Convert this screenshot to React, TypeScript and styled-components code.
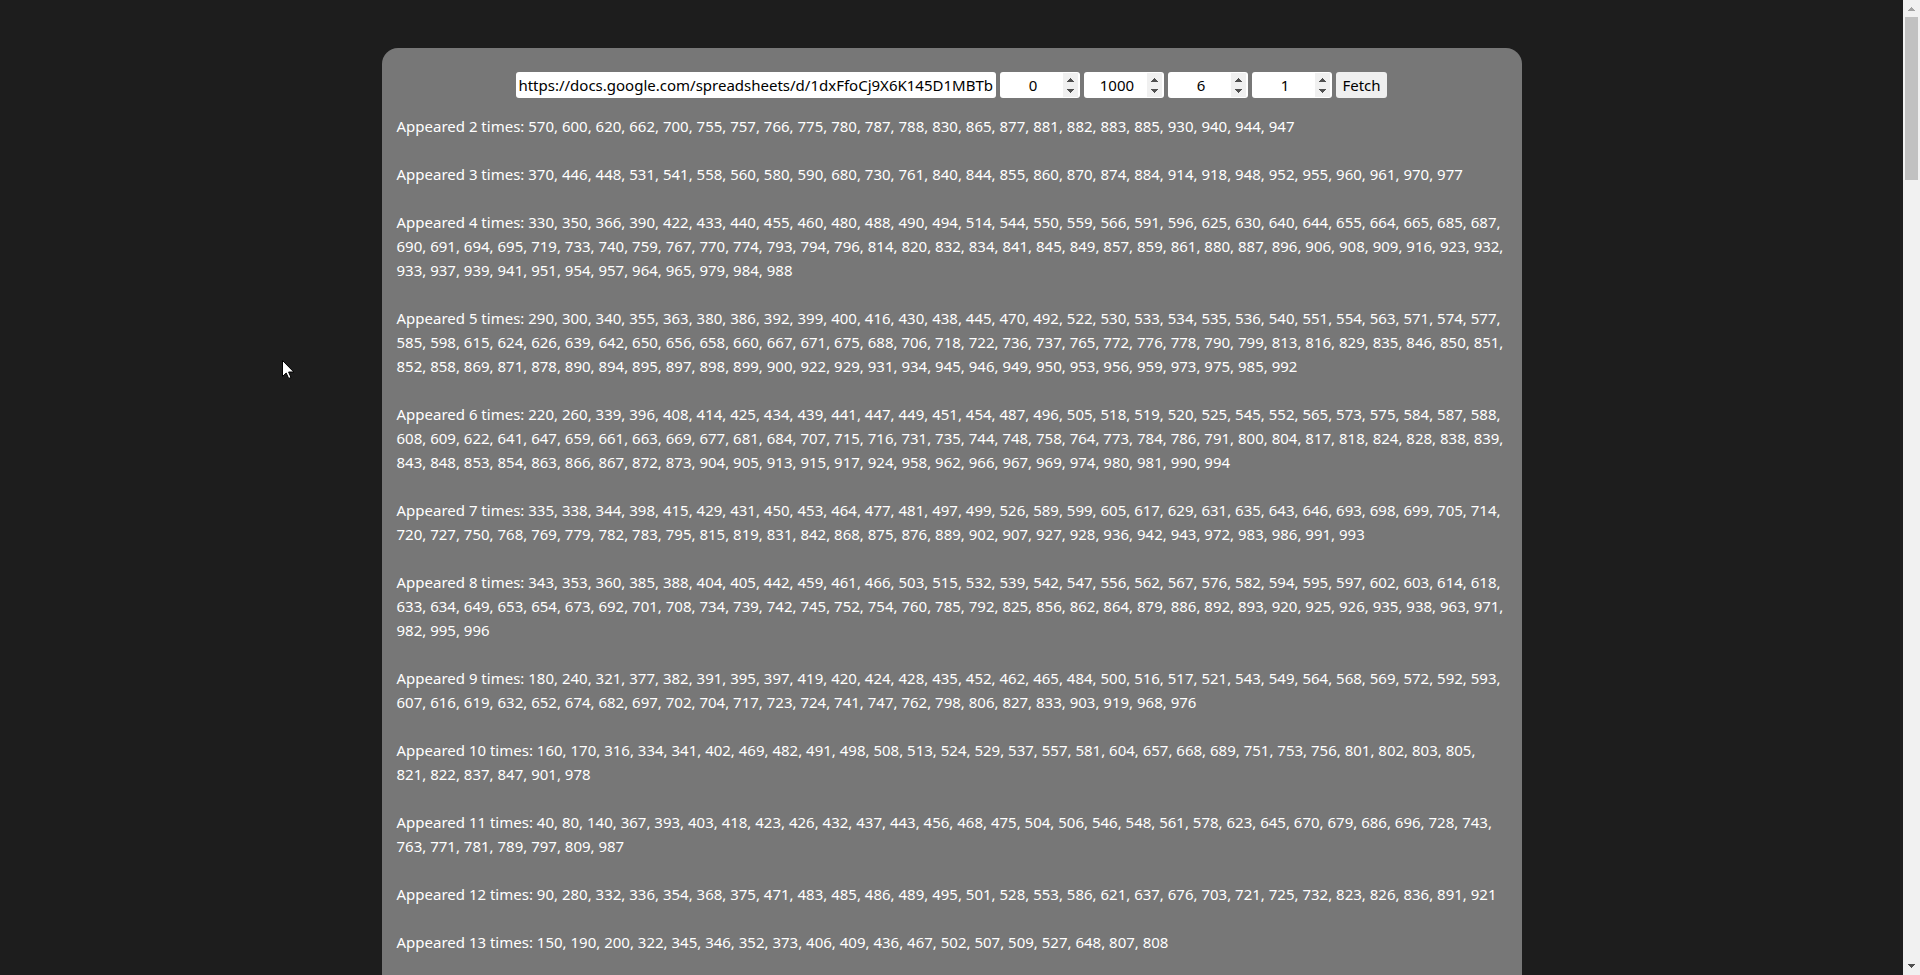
import React, { useState } from "react";
import styled, { createGlobalStyle } from "styled-components";

const GlobalStyle = createGlobalStyle`
  *, *::before, *::after { box-sizing: border-box; }
  body {
    margin: 0;
    background: #1d1d1d;
    color: #ffffff;
    font-family: "Noto Sans", "Open Sans", sans-serif;
    font-size: 15px;
    line-height: 24px;
  }
`;

const Page = styled.div`
  display: flex;
  height: 100vh;
  overflow: hidden;
`;

const Main = styled.main`
  flex: 1;
  min-width: 0;
  overflow: hidden;
  padding-top: 48px;
`;

const Panel = styled.section`
  max-width: 1140px;
  min-height: 100vh;
  margin: 0 auto;
  padding: 24px 15px;
  border-radius: 16px;
  background: #777777;
`;

const Controls = styled.form`
  display: flex;
  flex-wrap: wrap;
  justify-content: center;
  gap: 4px;
  margin-bottom: 16px;
`;

const spinnerArrows = `url("data:image/svg+xml,%3Csvg xmlns='http://www.w3.org/2000/svg' width='15' height='24' shape-rendering='crispEdges'%3E%3Cpath fill='%23505050' d='M7 5h1v1h1v1h1v1h1v1H4V8h1V7h1V6h1zM4 16h7v1h-1v1H9v1H8v1H7v-1H6v-1H5v-1H4z'/%3E%3C/svg%3E")`;

const Field = styled.input<{ $width: number }>`
  width: ${(p) => p.$width}px;
  height: 26px;
  padding: 1px 2px;
  border: 0;
  border-radius: 3px;
  background: #ffffff;
  color: #000000;
  font: inherit;
  text-align: ${(p) => (p.type === "number" ? "center" : "left")};

  &::-webkit-inner-spin-button {
    -webkit-appearance: none;
    width: 15px;
    height: 24px;
    margin: 0;
    background: #f0f0f0 ${spinnerArrows} no-repeat;
    opacity: 1;
  }
`;

const FetchButton = styled.button`
  height: 26px;
  padding: 0 6px;
  border: 0;
  border-radius: 3px;
  background: #efefef;
  color: #000000;
  font: inherit;
`;

const Results = styled.div`
  display: flex;
  flex-direction: column;
  gap: 24px;
`;

const Result = styled.p`
  margin: 0;
`;

const ScrollTrack = styled.div`
  display: flex;
  flex-direction: column;
  align-items: center;
  width: 17px;
  background: #f1f1f1;
`;

const ScrollArrow = styled.svg`
  flex: none;
  display: block;
  width: 17px;
  height: 17px;
`;

const ScrollRail = styled.div`
  flex: 1;
  width: 13px;
`;

const ScrollThumb = styled.div`
  height: 163px;
  background: #c1c1c1;
`;

const Pointer = styled.svg`
  position: fixed;
  left: 282px;
  top: 360px;
  width: 13px;
  height: 20px;
  pointer-events: none;
`;

const groups: { times: number; values: string }[] = [
  { times: 2, values: "570, 600, 620, 662, 700, 755, 757, 766, 775, 780, 787, 788, 830, 865, 877, 881, 882, 883, 885, 930, 940, 944, 947" },
  { times: 3, values: "370, 446, 448, 531, 541, 558, 560, 580, 590, 680, 730, 761, 840, 844, 855, 860, 870, 874, 884, 914, 918, 948, 952, 955, 960, 961, 970, 977" },
  { times: 4, values: "330, 350, 366, 390, 422, 433, 440, 455, 460, 480, 488, 490, 494, 514, 544, 550, 559, 566, 591, 596, 625, 630, 640, 644, 655, 664, 665, 685, 687, 690, 691, 694, 695, 719, 733, 740, 759, 767, 770, 774, 793, 794, 796, 814, 820, 832, 834, 841, 845, 849, 857, 859, 861, 880, 887, 896, 906, 908, 909, 916, 923, 932, 933, 937, 939, 941, 951, 954, 957, 964, 965, 979, 984, 988" },
  { times: 5, values: "290, 300, 340, 355, 363, 380, 386, 392, 399, 400, 416, 430, 438, 445, 470, 492, 522, 530, 533, 534, 535, 536, 540, 551, 554, 563, 571, 574, 577, 585, 598, 615, 624, 626, 639, 642, 650, 656, 658, 660, 667, 671, 675, 688, 706, 718, 722, 736, 737, 765, 772, 776, 778, 790, 799, 813, 816, 829, 835, 846, 850, 851, 852, 858, 869, 871, 878, 890, 894, 895, 897, 898, 899, 900, 922, 929, 931, 934, 945, 946, 949, 950, 953, 956, 959, 973, 975, 985, 992" },
  { times: 6, values: "220, 260, 339, 396, 408, 414, 425, 434, 439, 441, 447, 449, 451, 454, 487, 496, 505, 518, 519, 520, 525, 545, 552, 565, 573, 575, 584, 587, 588, 608, 609, 622, 641, 647, 659, 661, 663, 669, 677, 681, 684, 707, 715, 716, 731, 735, 744, 748, 758, 764, 773, 784, 786, 791, 800, 804, 817, 818, 824, 828, 838, 839, 843, 848, 853, 854, 863, 866, 867, 872, 873, 904, 905, 913, 915, 917, 924, 958, 962, 966, 967, 969, 974, 980, 981, 990, 994" },
  { times: 7, values: "335, 338, 344, 398, 415, 429, 431, 450, 453, 464, 477, 481, 497, 499, 526, 589, 599, 605, 617, 629, 631, 635, 643, 646, 693, 698, 699, 705, 714, 720, 727, 750, 768, 769, 779, 782, 783, 795, 815, 819, 831, 842, 868, 875, 876, 889, 902, 907, 927, 928, 936, 942, 943, 972, 983, 986, 991, 993" },
  { times: 8, values: "343, 353, 360, 385, 388, 404, 405, 442, 459, 461, 466, 503, 515, 532, 539, 542, 547, 556, 562, 567, 576, 582, 594, 595, 597, 602, 603, 614, 618, 633, 634, 649, 653, 654, 673, 692, 701, 708, 734, 739, 742, 745, 752, 754, 760, 785, 792, 825, 856, 862, 864, 879, 886, 892, 893, 920, 925, 926, 935, 938, 963, 971, 982, 995, 996" },
  { times: 9, values: "180, 240, 321, 377, 382, 391, 395, 397, 419, 420, 424, 428, 435, 452, 462, 465, 484, 500, 516, 517, 521, 543, 549, 564, 568, 569, 572, 592, 593, 607, 616, 619, 632, 652, 674, 682, 697, 702, 704, 717, 723, 724, 741, 747, 762, 798, 806, 827, 833, 903, 919, 968, 976" },
  { times: 10, values: "160, 170, 316, 334, 341, 402, 469, 482, 491, 498, 508, 513, 524, 529, 537, 557, 581, 604, 657, 668, 689, 751, 753, 756, 801, 802, 803, 805, 821, 822, 837, 847, 901, 978" },
  { times: 11, values: "40, 80, 140, 367, 393, 403, 418, 423, 426, 432, 437, 443, 456, 468, 475, 504, 506, 546, 548, 561, 578, 623, 645, 670, 679, 686, 696, 728, 743, 763, 771, 781, 789, 797, 809, 987" },
  { times: 12, values: "90, 280, 332, 336, 354, 368, 375, 471, 483, 485, 486, 489, 495, 501, 528, 553, 586, 621, 637, 676, 703, 721, 725, 732, 823, 826, 836, 891, 921" },
  { times: 13, values: "150, 190, 200, 322, 345, 346, 352, 373, 406, 409, 436, 467, 502, 507, 509, 527, 648, 807, 808" },
];

const numberFields = [
  { label: "Minimum", value: 0 },
  { label: "Maximum", value: 1000 },
  { label: "Column", value: 6 },
  { label: "Start row", value: 1 },
];

export default function App() {
  const [url, setUrl] = useState("https://docs.google.com/spreadsheets/d/1dxFfoCj9X6K145D1MBTb");

  return (
    <Page>
      <GlobalStyle />
      <Main>
        <Panel>
          <Controls onSubmit={(e) => e.preventDefault()}>
            <Field
              $width={480}
              type="text"
              aria-label="Spreadsheet URL"
              value={url}
              onChange={(e) => setUrl(e.target.value)}
            />
            {numberFields.map((f) => (
              <Field key={f.label} $width={80} type="number" aria-label={f.label} defaultValue={f.value} />
            ))}
            <FetchButton type="submit">Fetch</FetchButton>
          </Controls>
          <Results>
            {groups.map((g) => (
              <Result key={g.times}>
                {`Appeared ${g.times} times: ${g.values}`}
              </Result>
            ))}
          </Results>
        </Panel>
      </Main>
      <ScrollTrack aria-hidden="true">
        <ScrollArrow viewBox="0 0 17 17" shapeRendering="crispEdges">
          <path fill="#a3a3a3" d="M8 7h1v1h1v1h1v1h1v1H5v-1h1V9h1V8h1z" />
        </ScrollArrow>
        <ScrollRail>
          <ScrollThumb />
        </ScrollRail>
        <ScrollArrow viewBox="0 0 17 17" shapeRendering="crispEdges">
          <path fill="#505050" d="M5 6h7v1h-1v1h-1v1H9v1H8V9H7V8H6V7H5z" />
        </ScrollArrow>
      </ScrollTrack>
      <Pointer viewBox="0 0 13 20" aria-hidden="true">
        <path
          d="M.5 .5V16.5L4.2 13L6.7 18.5L9 17.5L6.6 12H11.8Z"
          fill="#ffffff"
          stroke="#000000"
          strokeWidth="1"
        />
      </Pointer>
    </Page>
  );
}
